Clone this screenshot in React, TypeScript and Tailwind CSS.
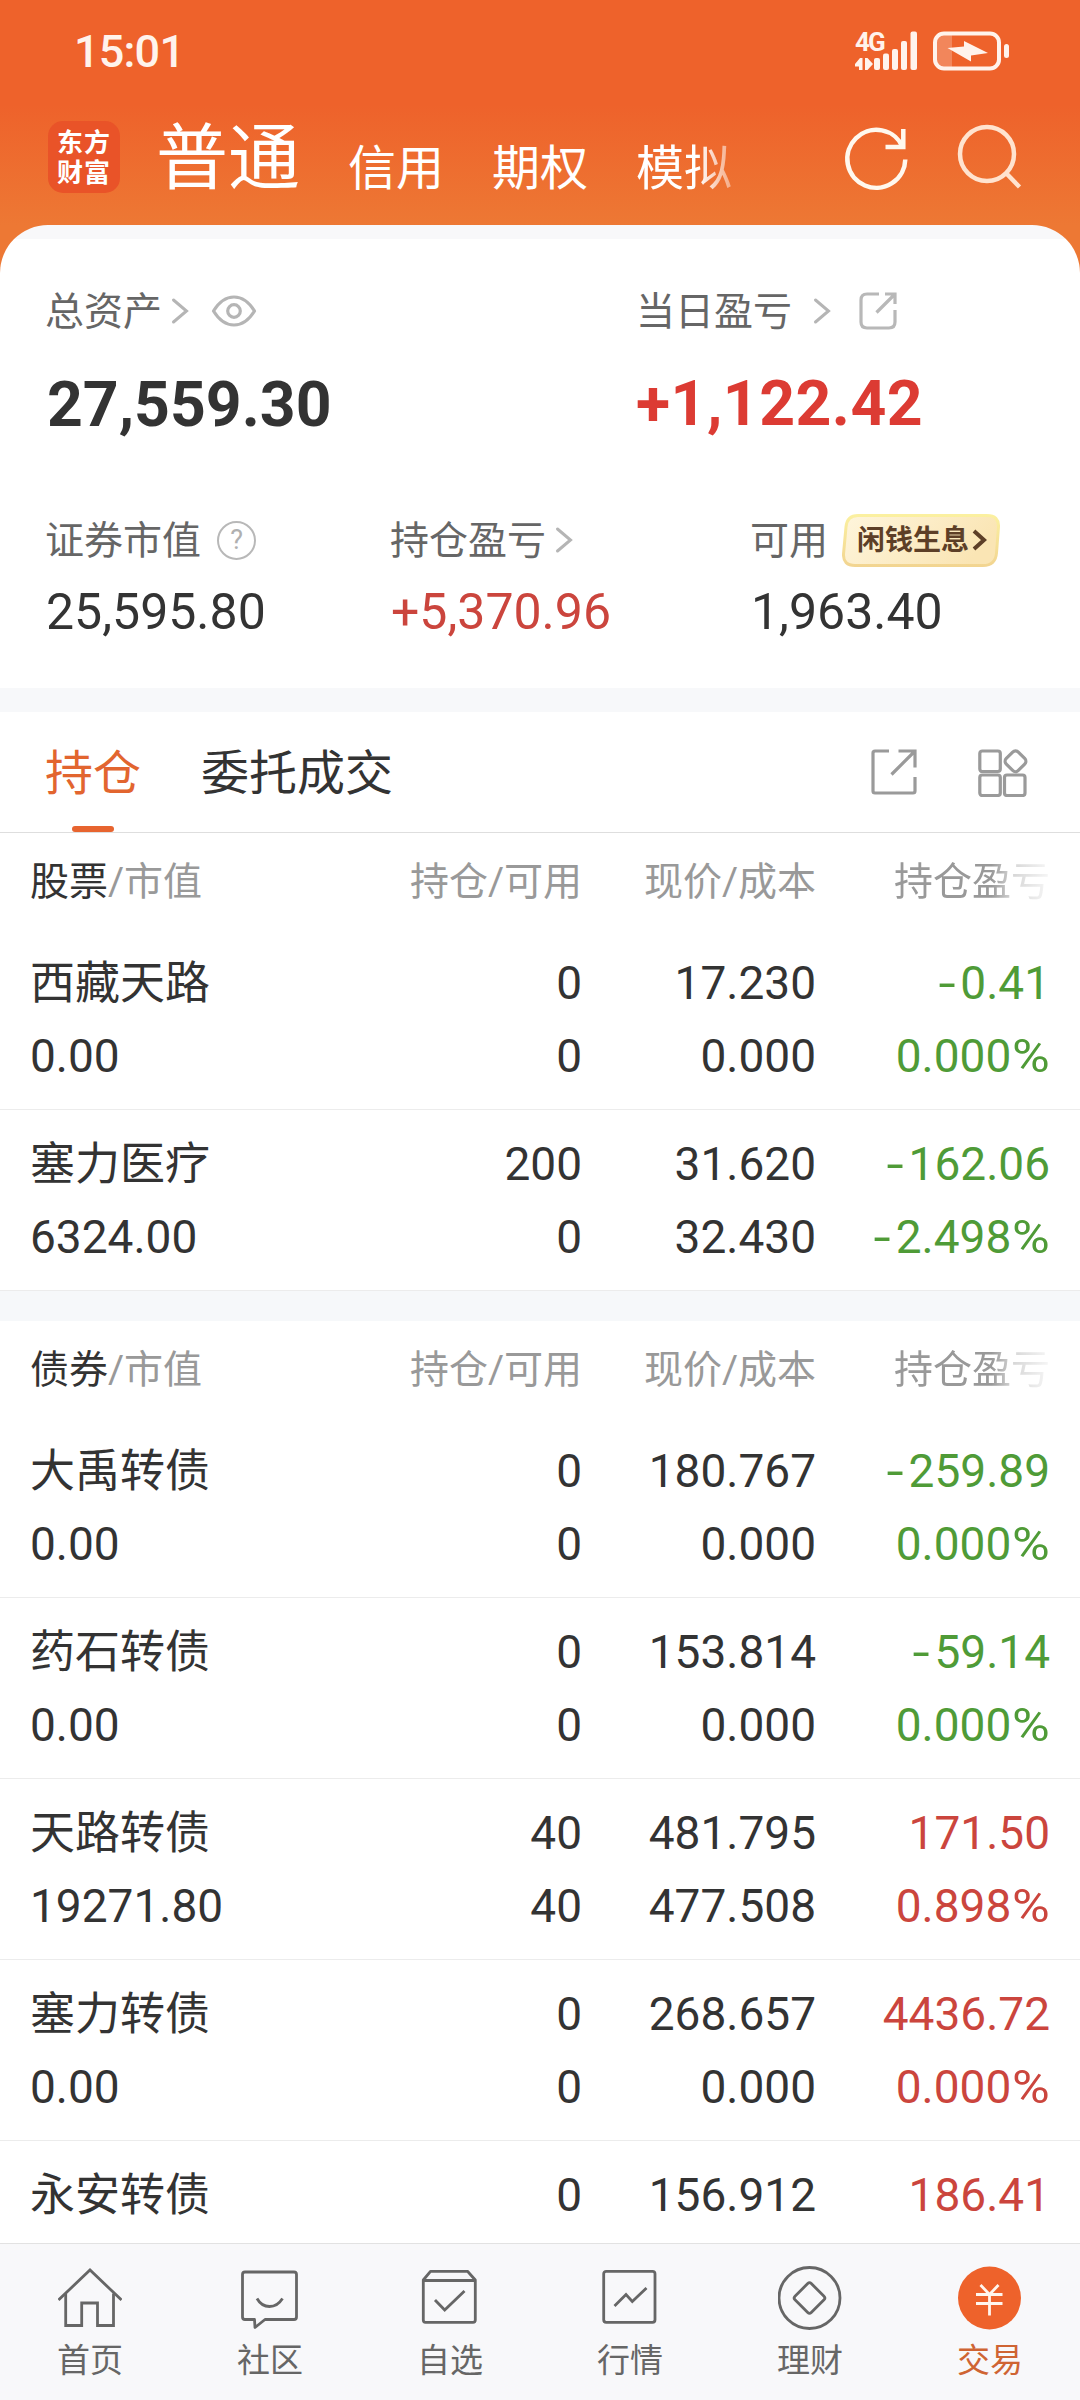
import type { ReactNode } from "react";
import clsx from "clsx";

type Trend = "up" | "down";

interface Holding {
  name: string;
  position: string;
  price: string;
  profit: string;
  trend: Trend;
  marketValue?: string;
  available?: string;
  cost?: string;
  profitRate?: string;
}

const stocks: Holding[] = [
  {
    name: "西藏天路",
    marketValue: "0.00",
    position: "0",
    available: "0",
    price: "17.230",
    cost: "0.000",
    profit: "-0.41",
    profitRate: "0.000%",
    trend: "down"
  },
  {
    name: "塞力医疗",
    marketValue: "6324.00",
    position: "200",
    available: "0",
    price: "31.620",
    cost: "32.430",
    profit: "-162.06",
    profitRate: "-2.498%",
    trend: "down"
  }
];

const bonds: Holding[] = [
  {
    name: "大禹转债",
    marketValue: "0.00",
    position: "0",
    available: "0",
    price: "180.767",
    cost: "0.000",
    profit: "-259.89",
    profitRate: "0.000%",
    trend: "down"
  },
  {
    name: "药石转债",
    marketValue: "0.00",
    position: "0",
    available: "0",
    price: "153.814",
    cost: "0.000",
    profit: "-59.14",
    profitRate: "0.000%",
    trend: "down"
  },
  {
    name: "天路转债",
    marketValue: "19271.80",
    position: "40",
    available: "40",
    price: "481.795",
    cost: "477.508",
    profit: "171.50",
    profitRate: "0.898%",
    trend: "up"
  },
  {
    name: "塞力转债",
    marketValue: "0.00",
    position: "0",
    available: "0",
    price: "268.657",
    cost: "0.000",
    profit: "4436.72",
    profitRate: "0.000%",
    trend: "up"
  },
  {
    name: "永安转债",
    position: "0",
    price: "156.912",
    profit: "186.41",
    trend: "up"
  }
];

function StatusBar() {
  return (
    <div className="flex h-[102px] items-center justify-between pl-[74px] pr-[71px] text-[#fff3ec]">
      <div className="pt-px text-[45px] leading-[60px] font-medium tracking-[-0.8px]">15:01</div>
      <div className="flex items-center gap-[15px]">
        <div className="relative h-[40px] w-[63px]">
          <span className="absolute -top-[2px] left-0 text-[26px] leading-[26px] font-bold tracking-[-2px]">4G</span>
          <svg className="absolute inset-0" width="63" height="40" viewBox="0 0 63 40" fill="currentColor">
            <path d="M0 33L5 27H7.500V39H4V35.500H0Z" />
            <path d="M10 27H12.500L18 33L12.500 39H10Z" />
            <rect x="19" y="27" width="6" height="12" rx="2" />
            <rect x="28" y="22.500" width="6" height="16.500" rx="2" />
            <rect x="37" y="18" width="6" height="21" rx="2" />
            <rect x="46" y="10" width="6" height="29" rx="2" />
            <rect x="55.500" y="0.500" width="6.500" height="38.500" rx="2" />
          </svg>
        </div>
        <svg width="76" height="40" viewBox="0 0 76 40" fill="none">
          <path d="M19 3H11Q3 3 3 11V28Q3 36 11 36H19Z" fill="currentColor" opacity="0.25" />
          <rect x="2" y="2.500" width="64" height="35" rx="9" stroke="currentColor" strokeWidth="4" />
          <rect x="71" y="13" width="5" height="14" rx="2.500" fill="currentColor" />
          <path d="M14.500 17L31 15.500V10L55 22L38 24.500V30.500Z" fill="currentColor" />
        </svg>
      </div>
    </div>
  );
}

function AccountTabs() {
  return (
    <div className="flex h-[123px] pl-12 text-white">
      <div className="mt-[19px] flex h-[72px] w-[72px] flex-col items-center justify-center rounded-[15px] bg-[#e95328] pt-px text-[26px] leading-[30px] font-bold tracking-[1px]">
        <span>东方</span>
        <span>财富</span>
      </div>
      <div className="ml-9 flex w-[620px] items-baseline gap-12 pt-[3px] whitespace-nowrap text-[48px] leading-[108px]">
        <span className="text-[72px]">普通</span>
        <span className="relative top-[2px]">信用</span>
        <span className="relative top-[2px]">期权</span>
        <span className="relative top-[2px] [mask-image:linear-gradient(90deg,#000_64%,rgba(0,0,0,0.4)_100%)]">
          模拟
        </span>
      </div>
      <div className="mt-[24px] ml-[67px] flex gap-[44px]">
        <svg width="66" height="66" viewBox="0 0 66 66" fill="none" stroke="#fff8ee" strokeWidth="4.500">
          <path d="M62.300 33.500A29 29 0 1 1 60 21.500" />
          <path d="M60.300 3V21H42.500" />
        </svg>
        <svg
          className="overflow-visible"
          width="66"
          height="66"
          viewBox="0 0 66 66"
          fill="none"
          stroke="#ffe3cf"
          strokeWidth="4.500"
        >
          <circle cx="34" cy="28" r="27" />
          <path d="M52.500 46.500L66.500 61" />
        </svg>
      </div>
    </div>
  );
}

function Chevron({ className }: { className?: string }) {
  return (
    <svg
      className={className}
      width="18"
      height="28"
      viewBox="0 0 18 28"
      fill="none"
      stroke="#b5b5b5"
      strokeWidth="3"
      strokeLinecap="round"
    >
      <path d="M2.500 3L15.500 14L2.500 25" />
    </svg>
  );
}

function EyeIcon() {
  return (
    <svg className="ml-[22px]" width="46" height="34" viewBox="0 0 46 34" fill="none" stroke="#b5b5b5" strokeWidth="3.200">
      <path d="M2.500 17C8 8 15 3 23 3S38 8 43.500 17C38 26 31 31 23 31S8 26 2.500 17Z" strokeLinejoin="round" />
      <circle cx="23" cy="17" r="6.300" />
    </svg>
  );
}

function Metric({ label, value, className }: { label: ReactNode; value: string; className?: string }) {
  return (
    <div className="flex flex-col">
      <div className="flex h-[60px] items-center text-[39px] leading-[60px] text-[#666]">{label}</div>
      <div className={clsx("mt-[12px] pl-px text-[50px] leading-[60px]", className)}>{value}</div>
    </div>
  );
}

function Summary() {
  return (
    <div className="h-[463px] rounded-t-[48px] bg-[linear-gradient(#f8f8fa_14px,#fff_14px)] pt-[56px]">
      <div className="grid grid-cols-[591px_1fr] pl-[45px]">
        <div>
          <div className="flex h-[60px] items-center text-[39px] leading-[60px] text-[#666]">
            <span className="pt-[2px]">总资产</span>
            <Chevron className="ml-[9px]" />
            <EyeIcon />
          </div>
          <div className="mt-[26px] pl-[2px] text-[62.500px] leading-[76px] font-bold text-[#333]">27,559.30</div>
        </div>
        <div>
          <div className="flex h-[60px] items-center text-[39px] leading-[60px] text-[#666]">
            <span className="pt-[2px]">当日盈亏</span>
            <Chevron className="ml-[21px]" />
            <svg
              className="ml-[28px]"
              width="38"
              height="38"
              viewBox="0 0 38 38"
              fill="none"
              stroke="#b8b8b8"
              strokeWidth="3.200"
            >
              <path d="M20 2H8Q2 2 2 8V30Q2 36 8 36H30Q36 36 36 30V18" />
              <path d="M26 2H36V12M36 2L17.500 20.500" />
            </svg>
          </div>
          <div className="mt-[25px] text-[62.500px] leading-[76px] font-bold tracking-[0.5px] text-[#dc3b33]">
            +1,122.42
          </div>
        </div>
      </div>
      <div className="mt-[67px] grid grid-cols-[345px_360px_1fr] pl-[45px]">
        <Metric
          value="25,595.80"
          className="text-[#333]"
          label={
            <>
              <span className="pt-[2px]">证券市值</span>
              <span className="ml-[16px] flex h-[39px] w-[39px] items-center justify-center rounded-full border-[2.500px] border-[#b8b8b8] text-[27px] leading-none text-[#b0b0b0]">
                ?
              </span>
            </>
          }
        />
        <Metric
          value="+5,370.96"
          className="text-[#cb453d]"
          label={
            <>
              <span className="pt-[2px]">持仓盈亏</span>
              <Chevron className="ml-[9px]" />
            </>
          }
        />
        <Metric
          value="1,963.40"
          className="text-[#333]"
          label={
            <>
              <span className="pt-[2px]">可用</span>
              <span className="relative ml-[14px] flex h-[53px] w-[158px] items-center pl-[15px] text-[28px] leading-[53px] font-bold text-[#5d3f27]">
                <svg className="absolute inset-0" width="158" height="53" viewBox="0 0 158 53">
                  <defs>
                    <linearGradient id="badge-fill" x1="0" y1="0" x2="1" y2="0.3">
                      <stop offset="0" stopColor="#fef5dc" />
                      <stop offset="1" stopColor="#fae5b4" />
                    </linearGradient>
                    <linearGradient id="badge-stroke" x1="0" y1="0" x2="0" y2="1">
                      <stop offset="0" stopColor="#fbf0a0" />
                      <stop offset="1" stopColor="#f2d591" />
                    </linearGradient>
                  </defs>
                  <path
                    d="M16 1.500H145Q157 1.500 156.500 13L154.500 39Q153.500 51.500 141 51.500H13Q1 51.500 1.500 40L4 13Q5 1.500 16 1.500Z"
                    fill="url(#badge-fill)"
                    stroke="url(#badge-stroke)"
                    strokeWidth="3"
                  />
                </svg>
                <span className="relative pt-px">闲钱生息</span>
                <svg className="relative ml-[3px]" width="15" height="22" viewBox="0 0 15 22" fill="none" stroke="currentColor" strokeWidth="4">
                  <path d="M2 2L12 11L2 20" />
                </svg>
              </span>
            </>
          }
        />
      </div>
    </div>
  );
}

function HoldingTabs() {
  return (
    <div className="flex h-[121px] items-start border-b border-[#dedede] pl-[45px] text-[48px] leading-[60px] text-[#333]">
      <div className="flex h-[120px] w-24 flex-col items-center justify-between pt-[32px] text-[#e2652f]">
        持仓
        <span className="h-[6px] w-[42px] rounded-full bg-[#e7642f]" />
      </div>
      <div className="ml-[60px] pt-[32px]">委托成交</div>
      <svg
        className="mt-[37px] ml-[478px]"
        width="46"
        height="46"
        viewBox="0 0 46 46"
        fill="none"
        stroke="#9a9a9a"
        strokeWidth="3.200"
      >
        <path d="M18 2H4Q2 2 2 4V42Q2 44 4 44H42Q44 44 44 42V28" />
        <path d="M27.500 2H44V18.500M44 2L20.500 25.500" />
      </svg>
      <svg
        className="mt-[37px] ml-[61px]"
        width="50"
        height="48"
        viewBox="0 0 50 48"
        fill="none"
        stroke="#9a9a9a"
        strokeWidth="3.200"
      >
        <rect x="1.800" y="2" width="20.500" height="20.500" rx="2.500" />
        <rect x="1.800" y="26" width="20.500" height="20.500" rx="2.500" />
        <rect x="26.500" y="26" width="20.500" height="20.500" rx="2.500" />
        <rect x="29" y="3.800" width="17" height="17" rx="4" transform="rotate(45 37.500 12.300)" />
      </svg>
    </div>
  );
}

function ListHeader({ title }: { title: string }) {
  return (
    <div className="grid h-[96px] shrink-0 grid-cols-[318px_234px_234px_234px] items-center px-[30px] pt-[3px] text-[39px] text-[#999]">
      <div>
        <span className="text-[#333]">{title}</span>/市值
      </div>
      <div className="text-right">持仓/可用</div>
      <div className="text-right">现价/成本</div>
      <div className="text-right [mask-image:linear-gradient(90deg,#000_75%,rgba(0,0,0,0.4)_84%,rgba(0,0,0,0.08)_100%)]">
        持仓盈亏
      </div>
    </div>
  );
}

// the sign and the percent mark are set a bit wider than the digits
function ProfitValue({ value }: { value: string }) {
  const negative = value.startsWith("-");
  const percent = value.endsWith("%");
  const digits = value.replace(/[-%]/g, "");

  return (
    <div>
      {negative && <span className="mr-[5px] inline-block origin-right scale-x-135">-</span>}
      {digits}
      {percent && <span className="ml-[5px] inline-block origin-right scale-x-112">%</span>}
    </div>
  );
}

function HoldingRow({ item }: { item: Holding }) {
  return (
    <div className="grid h-[181px] shrink-0 grid-cols-[318px_234px_234px_234px] border-b border-[#ececec] px-[30px] pt-[18px] text-[46px] leading-[73px] text-[#333]">
      <div>
        <div className="text-[45px]">{item.name}</div>
        <div>{item.marketValue}</div>
      </div>
      <div className="text-right">
        <div>{item.position}</div>
        <div>{item.available}</div>
      </div>
      <div className="text-right">
        <div>{item.price}</div>
        <div>{item.cost}</div>
      </div>
      <div className={clsx("text-right", item.trend === "up" ? "text-[#cb453d]" : "text-[#4f9b37]")}>
        <ProfitValue value={item.profit} />
        {item.profitRate && <ProfitValue value={item.profitRate} />}
      </div>
    </div>
  );
}

function NavItem({ label, active, children }: { label: string; active?: boolean; children: ReactNode }) {
  return (
    <div
      className={clsx(
        "flex flex-1 flex-col items-center pt-[22px] text-[33px] leading-[44px]",
        active ? "text-[#cf6433]" : "text-[#666]"
      )}
    >
      <svg width="64" height="64" viewBox="0 0 64 64" fill="none" stroke="currentColor" strokeWidth="2.800">
        {children}
      </svg>
      <span className="mt-[9px]">{label}</span>
    </div>
  );
}

function BottomNav() {
  return (
    <div className="flex h-[157px] border-t border-[#e2e2e2] bg-[#f8f8fa]">
      <NavItem label="首页">
        <path d="M0.500 34L32 4L63.500 34" />
        <path d="M7.700 27.500V59.500H23.700V37H39.500V59.500H55.500V27.500" />
      </NavItem>
      <NavItem label="社区">
        <path d="M7 6H56Q58.500 6 58.500 8.500V51Q58.500 53.500 56 53.500H27L17 61.500L16.500 53.500H7Q4.500 53.500 4.500 51V8.500Q4.500 6 7 6Z" strokeLinejoin="round" />
        <path d="M19 32.500Q23.500 40.500 31.500 40.500T44.500 32.500" />
      </NavItem>
      <NavItem label="自选">
        <path d="M5.300 14V54Q5.300 56.300 7.500 56.300H55Q57.300 56.300 57.300 54V14L49.500 5.300H12.500L5.300 14Z" strokeLinejoin="round" />
        <path d="M5.300 14.500H57.300M17 34L26.700 44L46.500 25" />
      </NavItem>
      <NavItem label="行情">
        <rect x="5.700" y="5.300" width="51.300" height="51" rx="2.500" />
        <path d="M16.500 40L28 28.500L34.300 35.500L48.500 22" />
      </NavItem>
      <NavItem label="理财">
        <circle cx="31.500" cy="32" r="30.500" />
        <rect x="20" y="20.500" width="23" height="23" rx="2.500" transform="rotate(45 31.500 32)" />
      </NavItem>
      <NavItem label="交易" active>
        <circle cx="31.500" cy="32" r="31.500" fill="#ee622b" stroke="none" />
        <path d="M22.500 19L31.500 28.500L40.500 19M18 28.500H44.500M18 37.500H44.500M31.500 28.500V49.500" stroke="#fff6ee" />
      </NavItem>
    </div>
  );
}

function App() {
  return (
    <div className="flex h-[2400px] w-[1080px] flex-col overflow-hidden bg-white font-[Roboto,'Noto_Sans_CJK_SC',sans-serif]">
      <div className="bg-[linear-gradient(#ee622b_105px,#ed7834_225px)]">
        <StatusBar />
        <AccountTabs />
        <Summary />
      </div>
      <div className="h-6 bg-[#f7f8fa]" />
      <HoldingTabs />
      <div className="flex min-h-0 flex-1 flex-col overflow-hidden">
        <ListHeader title="股票" />
        {stocks.map((item) => (
          <HoldingRow key={item.name} item={item} />
        ))}
        <div className="h-[30px] shrink-0 bg-[#f6f8fa]" />
        <ListHeader title="债券" />
        {bonds.map((item) => (
          <HoldingRow key={item.name} item={item} />
        ))}
      </div>
      <BottomNav />
    </div>
  );
}

export default App;
